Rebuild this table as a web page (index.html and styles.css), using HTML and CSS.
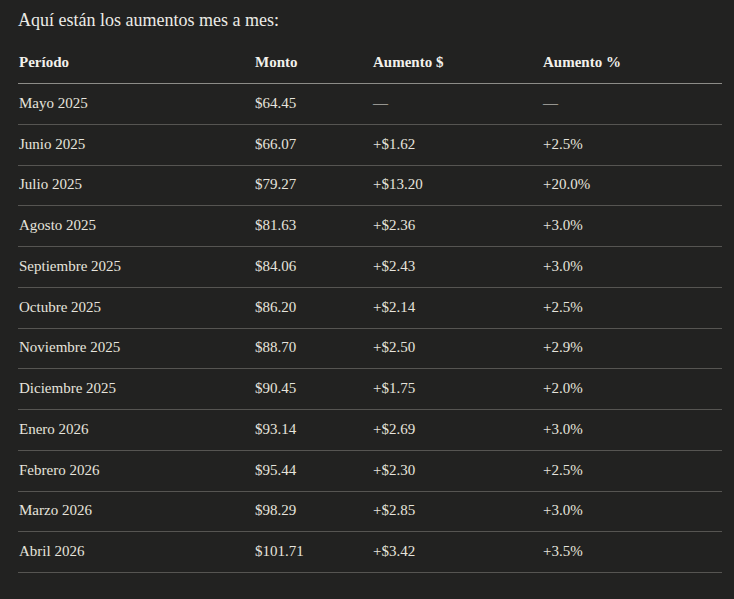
FILE: index.html
```html
<!DOCTYPE html>
<html lang="es">
<head>
<meta charset="utf-8">
<link rel="stylesheet" href="styles.css">
</head>
<body>
<div class="content">
  <p class="intro">Aquí están los aumentos mes a mes:</p>
  <table class="data">
    <thead>
      <tr><th class="c1">Período</th><th class="c2">Monto</th><th class="c3">Aumento $</th><th class="c4">Aumento %</th></tr>
    </thead>
    <tbody>
      <tr><td>Mayo 2025</td><td>$64.45</td><td>—</td><td>—</td></tr>
      <tr><td>Junio 2025</td><td>$66.07</td><td>+$1.62</td><td>+2.5%</td></tr>
      <tr><td>Julio 2025</td><td>$79.27</td><td>+$13.20</td><td>+20.0%</td></tr>
      <tr><td>Agosto 2025</td><td>$81.63</td><td>+$2.36</td><td>+3.0%</td></tr>
      <tr><td>Septiembre 2025</td><td>$84.06</td><td>+$2.43</td><td>+3.0%</td></tr>
      <tr><td>Octubre 2025</td><td>$86.20</td><td>+$2.14</td><td>+2.5%</td></tr>
      <tr><td>Noviembre 2025</td><td>$88.70</td><td>+$2.50</td><td>+2.9%</td></tr>
      <tr><td>Diciembre 2025</td><td>$90.45</td><td>+$1.75</td><td>+2.0%</td></tr>
      <tr><td>Enero 2026</td><td>$93.14</td><td>+$2.69</td><td>+3.0%</td></tr>
      <tr><td>Febrero 2026</td><td>$95.44</td><td>+$2.30</td><td>+2.5%</td></tr>
      <tr><td>Marzo 2026</td><td>$98.29</td><td>+$2.85</td><td>+3.0%</td></tr>
      <tr><td>Abril 2026</td><td>$101.71</td><td>+$3.42</td><td>+3.5%</td></tr>
    </tbody>
  </table>
</div>
</body>
</html>
```
FILE: styles.css
```css
html, body {
  margin: 0;
  padding: 0;
  background: #222221;
}
body {
  font-family: "Liberation Serif", "DejaVu Serif", serif;
  color: #e6e4dd;
}
.content {
  padding: 0 12px 0 18px;
}
.intro {
  margin: 8px 0 10px;
  font-size: 18px;
  line-height: 24px;
  color: #ecebe6;
}
.data {
  width: 704px;
  border-collapse: collapse;
  table-layout: fixed;
  font-size: 15px;
}
.data th {
  text-align: left;
  font-weight: bold;
  color: #f2f1ec;
  height: 39px;
  padding: 0 0 2px 1px;
  line-height: 24px;
  border-bottom: 1px solid #8d8c88;
}
.data td {
  padding: 0 0 2px 1px;
  height: 37.75px;
  line-height: 24px;
  border-bottom: 1px solid #565552;
}
.data th + th,
.data td + td {
  padding-left: 0;
}
.c1 { width: 236px; }
.c2 { width: 118px; }
.c3 { width: 170px; }
.c4 { width: auto; }
```
